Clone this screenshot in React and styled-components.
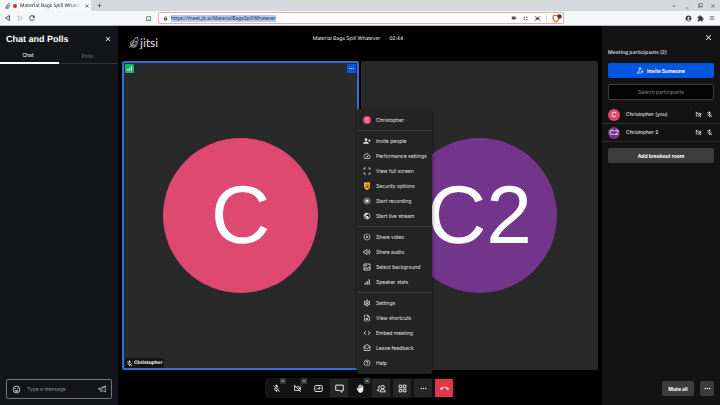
import React from 'react';
import styled, { createGlobalStyle, css } from 'styled-components';
import {
  MdPersonAddAlt1, MdSpeed, MdRadioButtonChecked, MdPublic, MdPlayCircleOutline,
  MdSignalCellularAlt, MdOutlineSettings, MdOutlineDescription, MdCode,
  MdOutlineDrafts, MdHelpOutline, MdMicOff, MdOutlineVideocamOff,
  MdMoreHoriz, MdCallEnd, MdClose, MdAdd, MdExpandLess, MdExpandMore, MdOutlineEmojiEmotions, MdRefresh,
  MdBookmarkBorder, MdLock, MdVideocam, MdExtension, MdMenu, MdMinimize, MdFilterNone,
  MdFullscreenExit, MdFitScreen, MdAccountCircle,
} from 'react-icons/md';

const sans = 'Inter, "Liberation Sans", sans-serif';
const headingSans = '"Liberation Sans", Arial, sans-serif';
const browserSans = '"Noto Sans", "Open Sans", sans-serif';

const Global = createGlobalStyle`
  *, *::before, *::after { box-sizing: border-box; }
  body { margin: 0; background: #000; font-family: ${sans}; text-rendering: geometricPrecision; }
  button, input { font: inherit; color: inherit; border: 0; padding: 0; margin: 0; background: none; outline: 0; }
  h1, h2, ul, p { margin: 0; padding: 0; list-style: none; font-weight: inherit; }
  svg { display: block; flex: none; }
`;

const Page = styled.div`
  display: flex; flex-direction: column; min-height: 100vh;
  font-size: 5px; line-height: 8px; color: #e6e6e6;
`;

const IconButton = styled.button`
  display: grid; place-items: center; flex: none;
  width: ${p => p.$w || 10}px; height: ${p => p.$h || 10}px;
`;

/* Browser frame */
const TabStrip = styled.div`
  display: flex; align-items: stretch; height: 11px; background: #d5d9dd; color: #333; font-family: ${browserSans};
`;
const BrowserTab = styled.div`
  display: flex; align-items: center; gap: 2px; width: 91px; padding: 0 1px 0 5px; background: #f8f9fa; color: #222;
`;
const TabTitle = styled.span`
  flex: 1; margin-left: 1px; white-space: nowrap; mask-image: linear-gradient(90deg, #000 80%, transparent);
`;
const RecDot = styled.span`width: 4px; height: 4px; border-radius: 50%; background: #e02a20; flex: none;`;
const Grow = styled.div`flex: ${p => p.$by || 1};`;
const WindowButtons = styled.div`display: flex; align-items: center; gap: 3px; padding-right: 2px;`;
const NavBar = styled.div`
  display: flex; align-items: center; height: 15px; padding: 0 3px; gap: 2px;
  background: #f5f6f7; color: #333; border-bottom: 1px solid #b9bcc0; font-family: ${browserSans};
`;
const NavGroup = styled.div`display: flex; gap: 2px;`;
const AddressBar = styled.form`
  display: flex; align-items: center; flex: 0 1 406px; height: 12px; padding: 0 1px 0 4px; gap: 3px;
  background: #fff; border: 1px solid #eeab9c; border-radius: 2px; color: #555;
`;
const Address = styled.input`
  field-sizing: content; background: #b3cdf0; color: #1c3150; height: 7px; line-height: 7px;
`;
const AddressTools = styled.div`display: flex; align-items: center; gap: 5px;`;
const Divider = styled.span`width: 1px; height: 6px; background: #ccc;`;

/* Meeting layout */
const Meeting = styled.div`
  flex: 1; display: grid; grid-template-columns: 118px minmax(0, 1fr) 118px; background: #000;
`;
const ChatPanel = styled.aside`display: flex; flex-direction: column; background: #131519;`;
const ChatHeader = styled.header`
  display: flex; align-items: center; justify-content: space-between; height: 25px; padding: 0 5px 0 6px; color: #fff;
`;
const ChatTitle = styled.h1`font-family: ${headingSans}; font-size: 9px; line-height: 12px; font-weight: 700;`;
const ChatTabs = styled.div`display: flex; height: 13px;`;
const ChatTab = styled.button`
  flex: 1; padding: 0 3px 3px 0; border-bottom: ${p => (p.$active ? '2px solid #fff' : '1px solid #303236')};
  color: ${p => (p.$active ? '#fff' : '#777')};
`;
const Composer = styled.form`
  display: flex; align-items: center; height: 20px; margin: auto 6px 6px; padding: 0 4px;
  border: 1px solid #74767a; border-radius: 2px; color: #ddd;
`;
const MessageInput = styled.input`
  flex: 1; min-width: 0; padding-left: 6px; &::placeholder { color: #8d8f93; opacity: 1; }
`;

const Stage = styled.main`display: grid; grid-template-rows: 35px 1fr 35px; padding: 0 4px;`;
const StageHeader = styled.header`
  display: grid; grid-template-columns: 1fr auto 1fr; align-items: center; padding: 0 11px 10px 7px; color: #eee;
`;
const Logo = styled.a`
  display: flex; align-items: center; margin-top: 8px; color: #ddd; text-decoration: none;
  font: 400 12px/14px Lato, sans-serif;
`;
const Subject = styled.div`display: flex; gap: 9px;`;
const Tiles = styled.div`display: grid; grid-template-columns: 1fr 1fr; gap: 2px;`;
const Tile = styled.section`
  display: flex; flex-direction: column; justify-content: space-between; align-items: flex-start;
  position: relative; background: #292929; border: 2px solid ${p => (p.$active ? '#2e71d2' : '#292929')}; border-radius: 2px;
`;
const TileTop = styled.div`display: flex; justify-content: space-between; width: 100%; padding: 1px;`;
const Badge = styled.button`
  display: grid; place-items: center; width: 9px; height: 9px; border-radius: 1px; background: ${p => p.$bg}; color: #fff;
`;
const BigAvatar = styled.div`
  position: absolute; inset: 0; margin: auto; width: 155px; height: 155px; border-radius: 50%;
  display: grid; place-items: center; background: ${p => p.$bg}; color: #fff;
  font-family: ${headingSans}; font-size: 82px; line-height: 80px;
`;
const NameTag = styled.div`
  display: flex; align-items: center; gap: 1px; height: 10px; margin: 0 1px; padding: 0 2px 0 1px;
  background: #141414; border-radius: 1px; font-family: ${headingSans}; font-weight: 700; color: #fff;
`;

const ToolbarRow = styled.footer`display: flex; justify-content: center; align-items: flex-start; padding-top: 8px;`;
const Toolbar = styled.nav`display: flex; gap: 3px; padding: 1px 2px; background: #131313; border-radius: 2px;`;
const ToolSlot = styled.div`position: relative;`;
const Tool = styled.button`
  display: grid; place-items: center; width: 18px; height: 18px; border-radius: 1px; color: #f2f2f2;
  ${p => p.$on && css`background: #262626;`}
  ${p => p.$hangup && css`background: #e0384a;`}
`;
const Caret = styled.button`
  position: absolute; top: -1px; right: -1px; width: 6px; height: 6px; display: grid; place-items: center;
  background: #3a3a3a; border-radius: 1px; color: #fff;
`;
const Menu = styled.div`
  position: absolute; z-index: 2; right: 0; bottom: calc(100% + 5px); width: 75px; padding-bottom: 1px;
  background: #242424; border-radius: 2px; box-shadow: 0 1px 4px #0008;
`;
const MenuGroup = styled.ul`padding: 2px 0 3px; & + & { border-top: 1px solid #3d3d3d; }`;
const HeaderGroup = styled.ul`padding: 3px 0; border-bottom: 1px solid #3d3d3d;`;
const MenuItem = styled.button`
  display: flex; align-items: center; gap: 5px; width: 100%; height: 15px; padding-left: 6px;
  white-space: nowrap; color: #e6e6e6;
`;
const Avatar = styled.span`
  display: grid; place-items: center; flex: none; border-radius: 50%; color: #fff; background: ${p => p.$bg};
  width: ${p => p.$size}px; height: ${p => p.$size}px; font-size: ${p => (p.$size > 8 ? 7 : 5)}px;
`;

const People = styled.aside`display: flex; flex-direction: column; padding: 0 6px 9px; background: #131313;`;
const PeopleTop = styled.div`
  display: flex; justify-content: flex-end; align-items: center; height: 22px; padding-right: 1px; color: #fff;
`;
const PeopleTitle = styled.h2`font-size: 5px; font-weight: 700; line-height: 9px; margin-top: 1px; color: #c2c2c2;`;
const WideButton = styled.button`
  display: flex; justify-content: center; align-items: center; gap: 3px; height: 15px; flex: none;
  margin-top: ${p => (p.$primary ? 5 : 6)}px;
  background: ${p => (p.$primary ? '#0056e0' : '#3d3d3d')}; color: #fff; font-weight: 700; border-radius: 2px;
`;
const Search = styled.input`
  height: 16px; margin: 6px 0; background: #040404; border: 1px solid #3d3d3d; border-radius: 2px; text-align: center;
  width: 100%; &::placeholder { color: #858585; opacity: 1; }
`;
const Person = styled.li`
  display: flex; align-items: center; height: 18px; margin: 0 -6px; padding: 0 7px 0 6px; gap: 4px;
  border-bottom: 1px solid #2b2b2b; color: #fff;
`;
const PersonName = styled.span`flex: 1; padding-left: 2px;`;
const PeopleFooter = styled.div`display: flex; justify-content: flex-end; gap: 6px; margin-top: auto;`;
const FooterButton = styled.button`
  display: grid; place-items: center; width: ${p => p.$w}px; height: 15px; background: #3d3d3d; color: #fff;
  font-weight: 700; border-radius: 2px;
`;

/* Icons */
const Line = ({ size = 8, w = 2, children }) => (
  <svg width={size} height={size} viewBox="0 0 24 24" fill="none" stroke="currentColor" strokeWidth={w} strokeLinejoin="round" aria-hidden="true">
    {children}
  </svg>
);
const Leaf = ({ size = 11 }) => (
  <Line size={size} w={1.6}>
    <path d="M1 23C4 17 9 13 14 9M5 18C1 13 5 8 11 8C11 3 15 1 19 1C16 4 21 5 20 8C18 11 15 10 13 11M5 18C10 21 16 20 18 15C19 12 17 11 15 10M7 16C6 13 8 11 11 11M8 17C11 18 14 17 15 14M4 21C9 23 14 22 17 20" />
  </Line>
);
const FullScreen = ({ size }) => <Line size={size} w={2.6}><path d="M3 8V3H8M16 3H21V8M21 16V21H16M8 21H3V16" /></Line>;
const Speaker = ({ size }) => (
  <Line size={size} w={2.2}><path d="M2 9V15H6L12 20V4L6 9ZM15 8Q18 12 15 16M18 4Q25 12 18 20" /></Line>
);
const Background = ({ size }) => (
  <Line size={size} w={2.4}><path d="M3 3H21V21H3ZM4 20L9 13L13 17L17 12L21 17" /><circle cx="9" cy="8" r="1.5" /></Line>
);
const ShareScreen = ({ size }) => (
  <Line size={size} w={2.4}><rect x="2" y="4" width="20" height="16" rx="3" /><path d="M7 15Q9 11 16 11M13 7L17 11L13 15" /></Line>
);
const ChatBubble = ({ size }) => <Line size={size} w={2.6}><path d="M2 3H22V17H18V22L12 17H2Z" /></Line>;
const Hand = ({ size }) => (
  <svg width={size} height={size} viewBox="0 0 24 24" fill="currentColor" stroke="currentColor" strokeWidth="1" strokeLinejoin="round" aria-hidden="true">
    <path d="M7 12V5Q8 3 9.500 5V3Q11 0 12.500 3V4Q14 2 15.500 4V6Q17 4 19 6V16Q18 23 12 23Q8 23 6 19L2 12Q4 10 7 14Z" />
    <path d="M9.500 5V11M12.500 4V11M15.500 5V11" stroke="#131313" />
  </svg>
);
const People2 = ({ size }) => (
  <Line size={size} w={2.4}>
    <circle cx="15" cy="8" r="4.5" /><path d="M8 21Q8 14 15 14Q22 14 22 21ZM8 5Q4 5 4 8.500Q4 11 7 12M1 18Q1 14 6 13M1 18H6" />
  </Line>
);
const Grid = ({ size }) => <Line size={size} w={2.4}><path d="M3 3H10V10H3ZM14 3H21V10H14ZM3 14H10V21H3ZM14 14H21V21H14Z" /></Line>;
const Invite = ({ size }) => (
  <Line size={size} w={2.4}><circle cx="10" cy="6" r="4" /><path d="M15 21H2Q2 13 10 13M18 12V20M14 16H22" /></Line>
);
const Shield = ({ size }) => (
  <svg width={size} height={size} viewBox="0 0 16 16" aria-hidden="true">
    <path d="M2 1H14V9Q13 14 8 16Q3 14 2 9Z" fill="#f8b73b" />
    <path d="M8 1H14V9Q13 14 8 16Z" fill="#ef9b2c" />
    <path d="M5 7H11V12H5Z" fill="#a85f1b" />
    <path d="M6 7V5Q8 3 10 5V7" fill="none" stroke="#a85f1b" />
  </svg>
);
const Send = () => <Line><path d="M1 12L22 3V21L14 17L9 21V14ZM9 14L22 3" /></Line>;
const Brave = () => (
  <svg width="10" height="9" viewBox="0 0 20 18" aria-hidden="true">
    <path d="M3 3H13L14 9Q12 14 8 16Q4 14 2 9Z" fill="#fff" stroke="#ee5a24" strokeWidth="2.4" />
    <circle cx="15" cy="5" r="4.5" fill="#3c4150" />
  </svg>
);
const Back = ({ faded, flip }) => (
  <svg width="8" height="8" viewBox="0 0 16 16" fill="none" stroke={faded ? '#bbb' : '#333'} strokeWidth="1.6" aria-hidden="true">
    <path d={flip ? 'M5 3L13 8L5 13Z' : 'M11 3L3 8L11 13Z'} />
  </svg>
);

const menu = [
  [[MdPersonAddAlt1, 'Invite people'], [MdSpeed, 'Performance settings'], [FullScreen, 'View full screen'],
    [Shield, 'Security options'], [MdRadioButtonChecked, 'Start recording'], [MdPublic, 'Start live stream']],
  [[MdPlayCircleOutline, 'Share video'], [Speaker, 'Share audio'], [Background, 'Select background'],
    [MdSignalCellularAlt, 'Speaker stats']],
  [[MdOutlineSettings, 'Settings'], [MdOutlineDescription, 'View shortcuts'], [MdCode, 'Embed meeting'],
    [MdOutlineDrafts, 'Leave feedback'], [MdHelpOutline, 'Help']],
];

const tools = [
  { icon: MdMicOff, label: 'Microphone', caret: true },
  { icon: MdOutlineVideocamOff, label: 'Camera', caret: true },
  { icon: ShareScreen, label: 'Share screen' },
  { icon: ChatBubble, label: 'Chat', on: true },
  { icon: Hand, label: 'Raise hand', caret: true },
  { icon: People2, label: 'Participants', on: true },
  { icon: Grid, label: 'Tile view', on: true },
  { icon: MdMoreHoriz, label: 'More actions', on: true, menu: true },
  { icon: MdCallEnd, label: 'Leave', hangup: true },
];

const people = [
  { initials: 'C', name: 'Christopher (you)', color: '#df486f' },
  { initials: 'C2', name: 'Christopher 2', color: '#73348c' },
];

const MoreMenu = () => (
  <Menu>
    <HeaderGroup><li><MenuItem><Avatar $size={8} $bg="#df486f">C</Avatar>Christopher</MenuItem></li></HeaderGroup>
    {menu.map((group, i) => (
      <MenuGroup key={i}>
        {group.map(([Icon, label]) => <li key={label}><MenuItem><Icon size={8} />{label}</MenuItem></li>)}
      </MenuGroup>
    ))}
  </Menu>
);

export default function App() {
  return (
    <Page>
      <Global />
      <TabStrip>
        <BrowserTab>
          <Leaf size={6} /><RecDot /><TabTitle>Material Bags Spill Whatev</TabTitle>
          <IconButton $w={6} aria-label="Close tab"><MdClose size={6} /></IconButton>
        </BrowserTab>
        <IconButton $w={16} aria-label="New tab"><MdAdd size={7} /></IconButton>
        <Grow />
        <WindowButtons>
          <IconButton aria-label="Tabs"><MdExpandMore size={6} /></IconButton>
          <IconButton aria-label="Minimize"><MdMinimize size={6} /></IconButton>
          <IconButton aria-label="Restore"><MdFilterNone size={5} /></IconButton>
          <IconButton aria-label="Close"><MdClose size={6} /></IconButton>
        </WindowButtons>
      </TabStrip>
      <NavBar>
        <NavGroup>
          <IconButton aria-label="Back"><Back /></IconButton>
          <IconButton aria-label="Forward"><Back faded flip /></IconButton>
          <IconButton aria-label="Reload"><MdRefresh size={8} /></IconButton>
        </NavGroup>
        <Grow $by={7} />
        <IconButton $w={14} aria-label="Bookmark"><MdBookmarkBorder size={7} /></IconButton>
        <AddressBar>
          <MdLock size={5} />
          <Address aria-label="Address" defaultValue="https://meet.jit.si/MaterialBagsSpillWhatever" />
          <Grow />
          <AddressTools>
            <MdVideocam size={6} /><MdFullscreenExit size={7} /><MdFitScreen size={7} /><Divider /><Brave />
          </AddressTools>
        </AddressBar>
        <Grow $by={8} />
        <IconButton aria-label="Profile"><MdAccountCircle size={7} /></IconButton>
        <IconButton aria-label="Extensions"><MdExtension size={7} /></IconButton>
        <IconButton aria-label="Menu"><MdMenu size={6} /></IconButton>
      </NavBar>
      <Meeting>
        <ChatPanel>
          <ChatHeader>
            <ChatTitle>Chat and Polls</ChatTitle>
            <IconButton aria-label="Close chat"><MdClose size={8} /></IconButton>
          </ChatHeader>
          <ChatTabs><ChatTab $active>Chat</ChatTab><ChatTab>Polls</ChatTab></ChatTabs>
          <Composer>
            <IconButton type="button" aria-label="Emoji"><MdOutlineEmojiEmotions size={9} /></IconButton>
            <MessageInput aria-label="Message" placeholder="Type a message" />
            <IconButton type="button" aria-label="Send"><Send /></IconButton>
          </Composer>
        </ChatPanel>
        <Stage>
          <StageHeader>
            <Logo href="#"><Leaf />jitsi</Logo>
            <Subject><span>Material Bags Spill Whatever</span><span>02:44</span></Subject>
          </StageHeader>
          <Tiles>
            <Tile $active>
              <BigAvatar $bg="#df486f">C</BigAvatar>
              <TileTop>
                <Badge $bg="#1eb06a" aria-label="Connection"><MdSignalCellularAlt size={7} /></Badge>
                <Badge $bg="#0056e0" aria-label="Options"><MdMoreHoriz size={7} /></Badge>
              </TileTop>
              <NameTag><MdMicOff size={7} />Christopher</NameTag>
            </Tile>
            <Tile><BigAvatar $bg="#73348c">C2</BigAvatar></Tile>
          </Tiles>
          <ToolbarRow>
            <Toolbar>
              {tools.map(({ icon: Icon, label, caret, on, hangup, menu: hasMenu }) => (
                <ToolSlot key={label}>
                  <Tool $on={on} $hangup={hangup} aria-label={label}><Icon size={9} /></Tool>
                  {caret && <Caret aria-label={`${label} options`}><MdExpandLess size={6} /></Caret>}
                  {hasMenu && <MoreMenu />}
                </ToolSlot>
              ))}
            </Toolbar>
          </ToolbarRow>
        </Stage>
        <People>
          <PeopleTop><IconButton aria-label="Close participants"><MdClose size={9} /></IconButton></PeopleTop>
          <PeopleTitle>Meeting participants (2)</PeopleTitle>
          <WideButton $primary><Invite size={7} />Invite Someone</WideButton>
          <Search aria-label="Search participants" placeholder="Search participants" />
          <ul>
            {people.map(({ initials, name, color }) => (
              <Person key={name}>
                <Avatar $size={12} $bg={color}>{initials}</Avatar>
                <PersonName>{name}</PersonName>
                <MdOutlineVideocamOff size={7} /><MdMicOff size={7} />
              </Person>
            ))}
          </ul>
          <WideButton>Add breakout room</WideButton>
          <PeopleFooter>
            <FooterButton $w={32}>Mute all</FooterButton>
            <FooterButton $w={14} aria-label="More"><MdMoreHoriz size={9} /></FooterButton>
          </PeopleFooter>
        </People>
      </Meeting>
    </Page>
  );
}
